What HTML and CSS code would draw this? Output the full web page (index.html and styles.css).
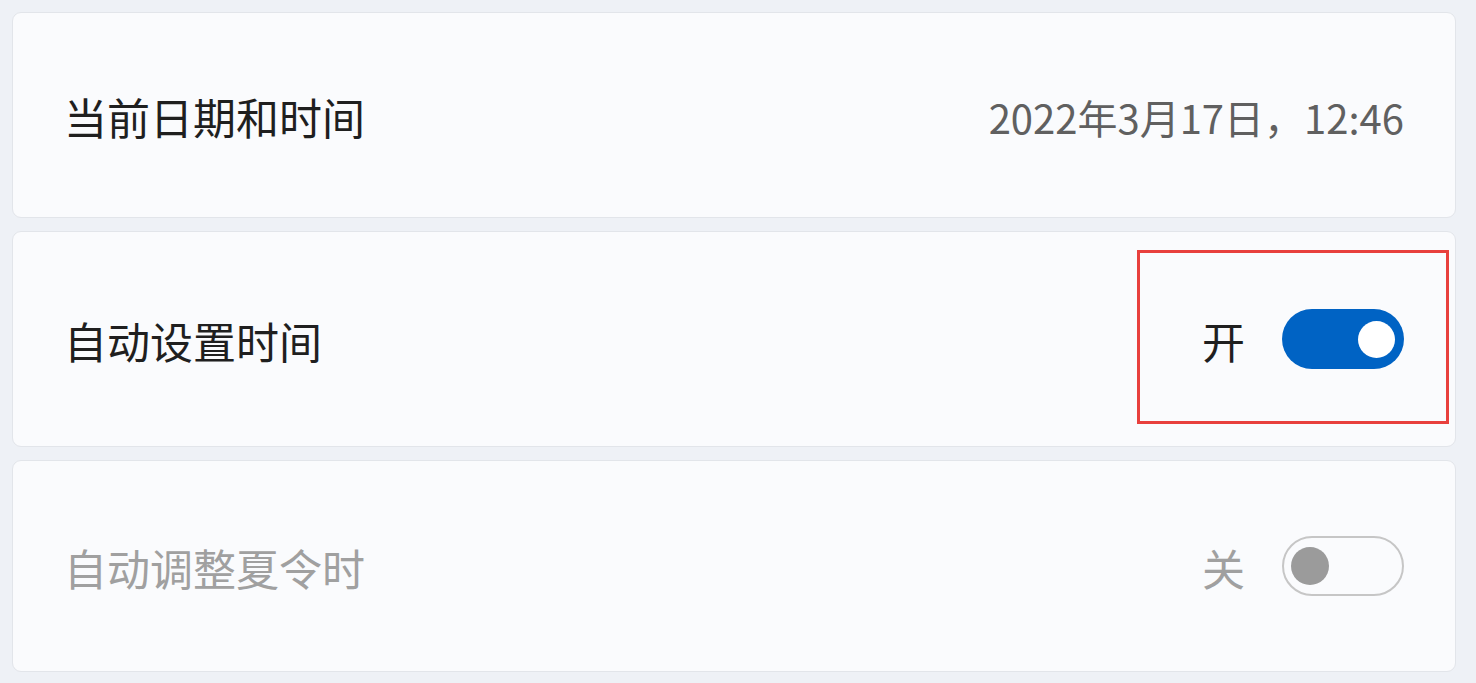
FILE: index.html
```html
<!DOCTYPE html>
<html lang="zh-CN">

<head>
  <meta charset="UTF-8">
  <meta name="viewport" content="width=device-width, initial-scale=1.0">
  <title>日期和时间</title>
  <link rel="stylesheet" href="styles.css">
</head>

<body>
  <div class="settings">
    <div class="card card-first">
      <span class="label">当前日期和时间</span>
      <span class="value">2022年3月17日，12:46</span>
    </div>
    <div class="card card-middle">
      <span class="label">自动设置时间</span>
      <div class="switch-group">
        <span class="state">开</span>
        <span class="toggle on"><span class="knob"></span></span>
      </div>
      <div class="highlight"></div>
    </div>
    <div class="card card-last disabled">
      <span class="label">自动调整夏令时</span>
      <div class="switch-group">
        <span class="state">关</span>
        <span class="toggle off"><span class="knob"></span></span>
      </div>
    </div>
  </div>
</body>

</html>
```

FILE: styles.css
```css
html,
body {
  margin: 0;
  height: 100%;
}

body {
  padding: 12px 20px 0 12px;
  box-sizing: border-box;
  background-color: #eef1f6;
  font-family: 'Noto Sans CJK SC', 'Noto Sans', sans-serif;
  color: #1f1f1f;
  overflow: hidden;
}

.settings {
  display: flex;
  flex-direction: column;
  gap: 13px;
}

.card {
  position: relative;
  display: flex;
  align-items: center;
  justify-content: space-between;
  padding: 4px 51px 0 51px;
  background-color: #fafbfd;
  border: 1px solid #e2e5ea;
  border-radius: 9px;
  box-sizing: border-box;
}

.card-first {
  height: 206px;
}

.card-middle {
  height: 216px;
}

.card-last {
  height: 212px;
}

.label {
  font-size: 43px;
  line-height: 1.2;
}

.value {
  font-size: 40px;
  line-height: 1.2;
  color: #606060;
}

.switch-group {
  display: flex;
  align-items: center;
  gap: 37px;
}

.state {
  font-size: 43px;
  line-height: 1.2;
}

.toggle {
  display: flex;
  align-items: center;
  width: 122px;
  height: 60px;
  border-radius: 30px;
  box-sizing: border-box;
  margin-top: -4px;
}

.toggle.on {
  background-color: #0063c4;
  justify-content: flex-end;
  padding-right: 9px;
}

.toggle.on .knob {
  width: 37px;
  height: 37px;
  border-radius: 50%;
  background-color: #ffffff;
}

.toggle.off {
  border: 2px solid #c6c6c6;
  padding-left: 7px;
}

.toggle.off .knob {
  width: 38px;
  height: 38px;
  border-radius: 50%;
  background-color: #9b9b9b;
}

.disabled .label,
.disabled .state {
  color: #a0a0a0;
}

.highlight {
  position: absolute;
  left: 1124px;
  top: 18px;
  width: 312px;
  height: 174px;
  border: 3px solid #e8403d;
  box-sizing: border-box;
}
```
